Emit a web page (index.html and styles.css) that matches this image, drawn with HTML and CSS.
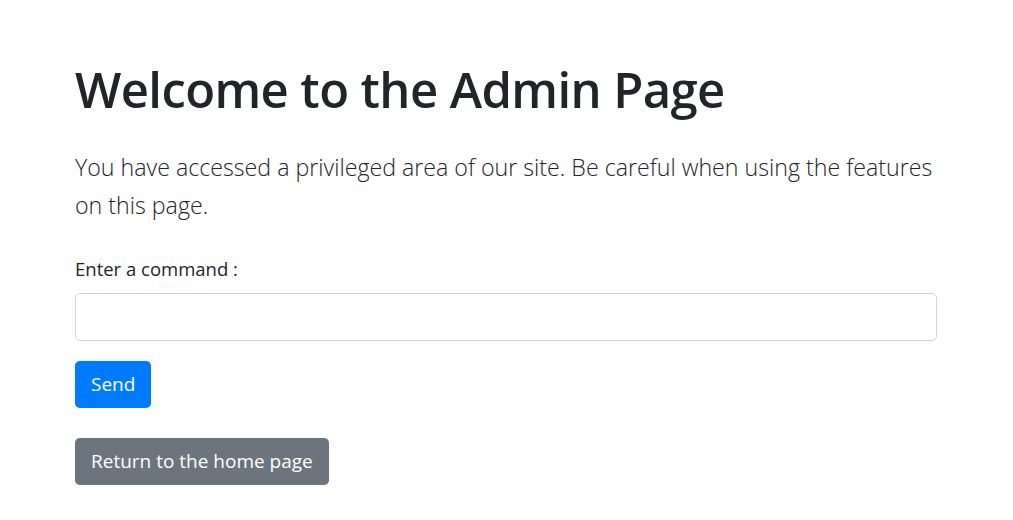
FILE: index.html
```html
<!DOCTYPE html>
<html lang="en">
<head>
<meta charset="utf-8">
<title>Admin Page</title>
<link rel="stylesheet" href="styles.css">
</head>
<body>
<main class="page">
  <h1 class="title">Welcome to the Admin Page</h1>
  <p class="lead">You have accessed a privileged area of our site. Be careful when using the features on this page.</p>
  <form class="cmd-form">
    <label class="label" for="cmd">Enter a command :</label>
    <input class="input" id="cmd" type="text">
    <button class="btn btn-primary" type="button">Send</button>
  </form>
  <a class="btn btn-secondary" href="#">Return to the home page</a>
</main>
</body>
</html>
```

FILE: styles.css
```css
* { box-sizing: border-box; }
html, body { margin: 0; background: #fff; }
body {
  font-family: "Open Sans", "Noto Sans", sans-serif;
  color: #212529;
  font-size: 16px;
}
.page {
  padding: 60px 76px 0 75px;
  display: flex;
  flex-direction: column;
  align-items: flex-start;
}
.title {
  margin: 0;
  font-size: 49px;
  font-weight: 600;
  line-height: 1.2;
  letter-spacing: -0.6px;
}
.lead {
  margin: 29.5px 0 0;
  font-size: 23.2px;
  font-weight: 300;
  line-height: 38px;
}
.cmd-form {
  margin-top: 30.5px;
  width: 100%;
  display: flex;
  flex-direction: column;
  align-items: flex-start;
}
.label {
  font-size: 18.5px;
  line-height: 27px;
  margin-bottom: 11px;
}
.input {
  width: 100%;
  height: 48px;
  border: 1px solid #ced4da;
  border-radius: 4.8px;
  font-size: 20px;
  padding: 8px 16px;
  font-family: inherit;
}
.btn {
  display: inline-block;
  height: 47px;
  padding: 0 16px;
  border: 0;
  border-radius: 4.8px;
  color: #fff;
  font-family: inherit;
  font-size: 19px;
  line-height: 47px;
  text-decoration: none;
}
.btn-primary {
  margin-top: 20px;
  background: #007bff;
}
.btn-secondary {
  margin-top: 30px;
  background: #6c757d;
}
```
